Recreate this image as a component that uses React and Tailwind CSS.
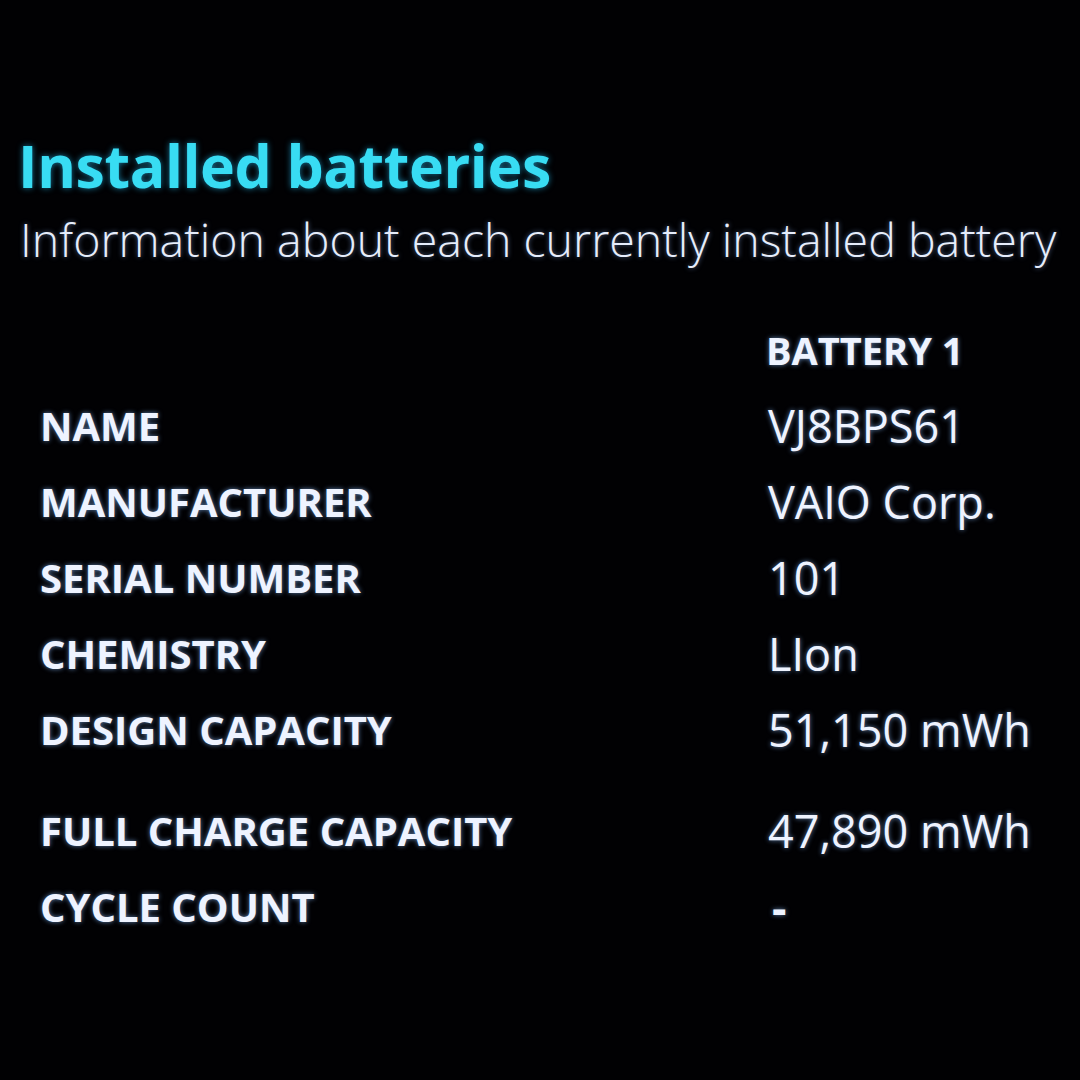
const rows = [
  { label: "NAME", value: "VJ8BPS61" },
  { label: "MANUFACTURER", value: "VAIO Corp." },
  { label: "SERIAL NUMBER", value: "101" },
  { label: "CHEMISTRY", value: "LIon" },
  { label: "DESIGN CAPACITY", value: "51,150 mWh" },
  { label: "FULL CHARGE CAPACITY", value: "47,890 mWh", gap: true },
  { label: "CYCLE COUNT", value: "-" },
];

export default function App() {
  return (
    <div className="w-[1080px] h-[1080px] bg-[#010103] overflow-hidden font-['Open_Sans',sans-serif] pt-[133px]">
      <h1 className="pl-[18px] h-[64px] text-[59px] leading-[64px] font-bold tracking-[-0.4px] text-[#38dcf3] [text-shadow:0_0_6px_rgba(40,200,255,0.6)]">
        Installed batteries
      </h1>
      <p className="pl-[20px] mt-[18px] h-[48px] text-[46.5px] leading-[48px] font-light text-[#e6edfb] [text-shadow:0_0_5px_rgba(150,190,255,0.55)]">
        Information about each currently installed battery
      </p>

      <div className="mt-[49px] text-[#eef3ff] [text-shadow:0_0_5px_rgba(140,190,255,0.65)]">
        <div className="grid grid-cols-[728px_1fr] h-[76px] leading-[76px]">
          <div></div>
          <div className="pl-[38px] text-[38px] font-bold">BATTERY 1</div>
        </div>
        {rows.map((r) => (
          <div
            key={r.label}
            className={`grid grid-cols-[728px_1fr] h-[76px] leading-[76px] ${r.gap ? "mt-[25px]" : ""}`}
          >
            <div className="pl-[40px] text-[40px] font-bold">{r.label}</div>
            <div className="pl-[40px] text-[45px] font-medium">
              {r.value === "-" ? <span className="pl-[4px] font-bold">-</span> : r.value}
            </div>
          </div>
        ))}
      </div>
    </div>
  );
}
